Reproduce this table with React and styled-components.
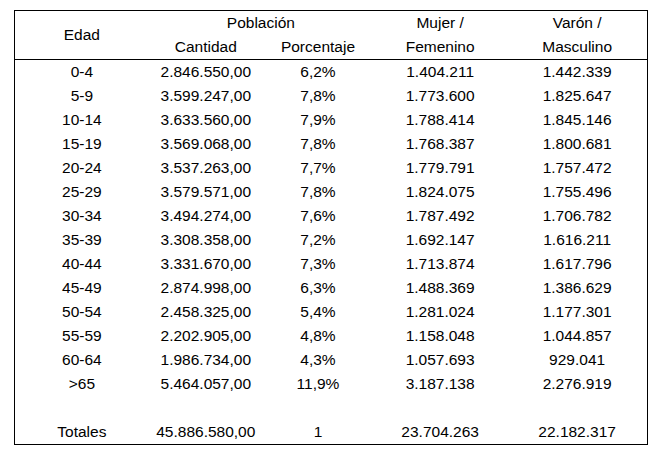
import React from 'react'
import styled, { createGlobalStyle } from 'styled-components'

const rows = [
	['0-4', '2.846.550,00', '6,2%', '1.404.211', '1.442.339'],
	['5-9', '3.599.247,00', '7,8%', '1.773.600', '1.825.647'],
	['10-14', '3.633.560,00', '7,9%', '1.788.414', '1.845.146'],
	['15-19', '3.569.068,00', '7,8%', '1.768.387', '1.800.681'],
	['20-24', '3.537.263,00', '7,7%', '1.779.791', '1.757.472'],
	['25-29', '3.579.571,00', '7,8%', '1.824.075', '1.755.496'],
	['30-34', '3.494.274,00', '7,6%', '1.787.492', '1.706.782'],
	['35-39', '3.308.358,00', '7,2%', '1.692.147', '1.616.211'],
	['40-44', '3.331.670,00', '7,3%', '1.713.874', '1.617.796'],
	['45-49', '2.874.998,00', '6,3%', '1.488.369', '1.386.629'],
	['50-54', '2.458.325,00', '5,4%', '1.281.024', '1.177.301'],
	['55-59', '2.202.905,00', '4,8%', '1.158.048', '1.044.857'],
	['60-64', '1.986.734,00', '4,3%', '1.057.693', '929.041'],
	['>65', '5.464.057,00', '11,9%', '3.187.138', '2.276.919'],
]

const totals = ['Totales', '45.886.580,00', '1', '23.704.263', '22.182.317']

const widths = [134, 114, 110, 134, 140]

const App = () => {
	return (
		<Page>
			<GlobalStyle />
			<Table>
				<colgroup>
					{widths.map((w, i) => <col key={i} style={{ width: w }} />)}
				</colgroup>
				<Head>
					<tr>
						<HeadCell rowSpan={2}>Edad</HeadCell>
						<HeadCell colSpan={2}>Población</HeadCell>
						<HeadCell rowSpan={2} stacked>Mujer /<br />Femenino</HeadCell>
						<HeadCell rowSpan={2} stacked>Varón /<br />Masculino</HeadCell>
					</tr>
					<tr>
						<HeadCell>Cantidad</HeadCell>
						<HeadCell>Porcentaje</HeadCell>
					</tr>
				</Head>
				<tbody>
					{rows.map((r) => (
						<Row key={r[0]}>
							{r.map((v, i) => <Cell key={i}>{v}</Cell>)}
						</Row>
					))}
					<Row>
						<Cell colSpan={5} />
					</Row>
					<Row>
						{totals.map((v, i) => <Cell key={i}>{v}</Cell>)}
					</Row>
				</tbody>
			</Table>
		</Page>
	)
}

const GlobalStyle = createGlobalStyle`
	body {
		margin: 0;
		background: #fff;
		font-family: "Liberation Sans", Arial, sans-serif;
	}
`

const Page = styled.div`
	padding: 10px 0 0 14px;
`

const Table = styled.table`
	border-collapse: collapse;
	table-layout: fixed;
	width: 634px;
	border: 1px solid #000;
	font-size: 15.5px;
	color: #000;
`

const Head = styled.thead`
	border-bottom: 1px solid #000;
`

const HeadCell = styled.th`
	font-weight: normal;
	text-align: center;
	padding: 0;
	height: 24px;
	line-height: 24px;
	vertical-align: ${(p) => (p.stacked ? 'top' : 'middle')};
`

const Row = styled.tr`
	height: 24px;
`

const Cell = styled.td`
	text-align: center;
	padding: 0;
	height: 24px;
	line-height: 24px;
`

export default App
